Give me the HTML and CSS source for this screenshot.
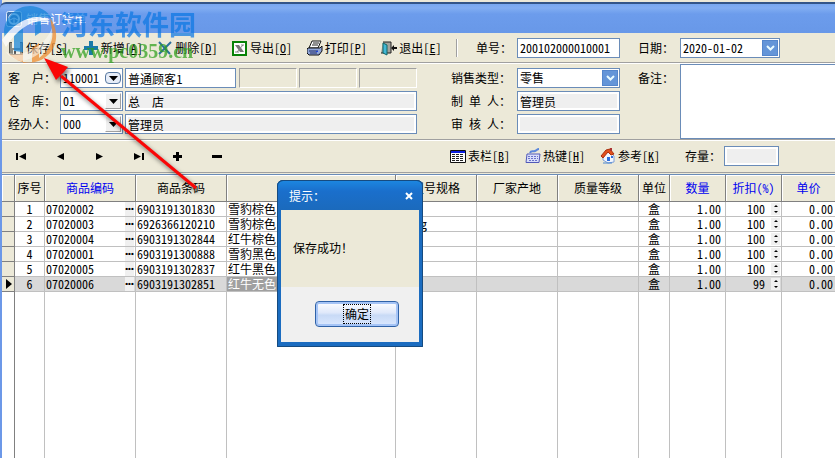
FILE: index.html
```html
<!DOCTYPE html>
<html lang="zh-CN">
<head>
<meta charset="utf-8">
<title>销售订货单</title>
<link rel="stylesheet" href="styles.css">
</head>
<body>
<div class="window">
  <header class="titlebar">
    <svg class="app-icon" width="16" height="16" viewBox="0 0 16 16"><rect x=".5" y=".5" width="15" height="15" rx="2" fill="#3c73b4" stroke="#dbe9fb"/><circle cx="8" cy="8" r="5" fill="none" stroke="#e8f2ff" stroke-width="2"/><path d="M4 9l4-2 4 2M8 8v4" stroke="#e8f2ff" fill="none"/></svg>
    <h1 class="title">销售订货单</h1>
  </header>

  <div class="toolbar">
    <div class="tools">
      <button class="tool"><svg width="16" height="16" viewBox="0 0 16 16"><path d="M1.500 2.500h13v12h-12l-1-1z" fill="#8b8b83" stroke="#55554f"/><path d="M4 2h8v6H4zM5 10h7v4H5z" fill="#f3f0e6"/><path d="M6 11h2v3H6z" fill="#555"/></svg>保存[<u>S</u>]</button>
      <button class="tool"><svg width="16" height="16" viewBox="0 0 16 16"><path d="M6 1h4v5h5v4h-5v5H6v-5H1V6h5z" fill="#1a7ba8"/></svg>新增[<u>A</u>]</button>
      <button class="tool"><svg width="16" height="16" viewBox="0 0 16 16"><path d="M2 2l11 12M14 2L2 14" stroke="#2b6f9e" stroke-width="2" fill="none"/></svg>删除[<u>D</u>]</button>
      <button class="tool"><svg width="16" height="16" viewBox="0 0 16 16"><rect x="1" y="2" width="13" height="13" fill="#fff" stroke="#078207" stroke-width="2"/><path d="M3 5h4l5 7H8z" fill="#777"/><path d="M11 5L5 12M3 12h4M9 5h3" stroke="#888" fill="none"/></svg>导出[<u>O</u>]</button>
      <button class="tool"><svg width="16" height="16" viewBox="0 0 16 16"><path d="M5 1h9l-3 7H2z" fill="#fff" stroke="#111"/><path d="M6 3h6M5 5h6" stroke="#222"/><path d="M1 8h12l2-2v5l-3 4H2l-2-2v-4z" fill="#8fa5d8" stroke="#111"/><path d="M2 11h9M3 13h7" stroke="#1e2b66"/><path d="M9 11h2v1H9z" fill="#1c40d8"/></svg>打印[<u>P</u>]</button>
      <button class="tool"><svg width="16" height="16" viewBox="0 0 16 16"><path d="M2 2h8v11H0" fill="#a3a39c" stroke="#222"/><path d="M2 3l4 2v10l-4-2z" fill="#41b7d6" stroke="#166"/><path d="M10 8l3-3v2h3v2h-3v2z" fill="#111"/></svg>退出[<u>E</u>]</button>
    </div>
    <span class="divider"></span>
    <label class="lab lab-no" for="no">单号：</label>
    <input class="field mid" id="no" value="200102000010001">
    <label class="lab lab-date" for="date">日期：</label>
    <span class="combo combo-date"><select id="date"><option>2020-01-02</option></select><span class="drop blue"><svg width="9" height="8" viewBox="0 0 9 8"><path d="M1 2l3.500 3.500L8 2" stroke="#e9fbff" stroke-width="2" fill="none"/></svg></span></span>
  </div>

  <div class="form">
    <div class="grid-left">
      <label class="lab" for="cust">客　户：</label>
      <div class="line">
        <span class="combo combo-s"><select id="cust"><option>110001</option></select><span class="drop hot"><svg width="9" height="5" viewBox="0 0 9 5"><path d="M0 0h9L4.500 5z"/></svg></span></span>
        <input class="field w-name" aria-label="客户名称" value="普通顾客1">
        <span class="well"></span><span class="well"></span><span class="well"></span>
      </div>
      <label class="lab" for="store">仓　库：</label>
      <div class="line">
        <span class="combo combo-s"><select id="store"><option>01</option></select><span class="drop"><svg width="9" height="5" viewBox="0 0 9 5"><path d="M0 0h9L4.500 5z"/></svg></span></span>
        <input class="field ro grow" aria-label="仓库名称" readonly value="总　店">
      </div>
      <label class="lab" for="oper">经办人：</label>
      <div class="line">
        <span class="combo combo-s"><select id="oper"><option>000</option></select><span class="drop"><svg width="9" height="5" viewBox="0 0 9 5"><path d="M0 0h9L4.500 5z"/></svg></span></span>
        <input class="field ro grow" aria-label="经办人姓名" readonly value="管理员">
      </div>
    </div>
    <div class="grid-mid">
      <label class="lab" for="type">销售类型：</label>
      <span class="combo"><select id="type"><option>零售</option></select><span class="drop blue"><svg width="9" height="8" viewBox="0 0 9 8"><path d="M1 2l3.500 3.500L8 2" stroke="#e9fbff" stroke-width="2" fill="none"/></svg></span></span>
      <label class="lab spread" for="maker"><span>制</span><span>单</span><span>人：</span></label>
      <input class="field ro" id="maker" readonly value="管理员">
      <label class="lab spread" for="check"><span>审</span><span>核</span><span>人：</span></label>
      <input class="field ro" id="check" readonly value="">
    </div>
    <label class="lab lab-note" for="note">备注：</label>
    <textarea class="note" id="note"></textarea>
  </div>

  <div class="nav">
    <div class="nav-left">
      <button class="step" aria-label="首条"><svg width="11" height="9" viewBox="0 0 11 9"><path d="M0 1h2v7H0zM10 1v7L3 4.500z"/></svg></button>
      <button class="step" aria-label="上一条"><svg width="11" height="9" viewBox="0 0 11 9"><path d="M9 1v7L2 4.500z"/></svg></button>
      <button class="step" aria-label="下一条"><svg width="11" height="9" viewBox="0 0 11 9"><path d="M2 1v7l7-3.500z"/></svg></button>
      <button class="step" aria-label="末条"><svg width="11" height="9" viewBox="0 0 11 9"><path d="M1 1v7l7-3.500zM9 1h2v7H9z"/></svg></button>
      <button class="step" aria-label="增行"><svg width="11" height="9" viewBox="0 0 11 9"><path d="M4 0h3v3h3v3H7v3H4V6H1V3h3z"/></svg></button>
      <button class="step" aria-label="删行"><svg width="11" height="9" viewBox="0 0 11 9"><path d="M1 3h10v3H1z"/></svg></button>
    </div>
    <button class="tool"><svg width="16" height="16" viewBox="0 0 16 16"><path d="M.5 2.500h15v12H.5z" fill="#fff" stroke="#111"/><path d="M1 3h14v2H1z" fill="#0a1ee0"/><path d="M2 6.500h12M2 8.500h12M2 10.500h12M2 12.500h12" stroke="#222" stroke-dasharray="3 1"/></svg>表栏[<u>B</u>]</button>
    <button class="tool"><svg width="16" height="16" viewBox="0 0 16 16"><path d="M2 6h13l-1 8.500H1z" fill="#d9defa" stroke="#5058b8"/><path d="M3 8.500h10M3 10.500h10M4 12.500h8" stroke="#6a73c8" stroke-dasharray="2 1"/><path d="M5 5c1-3 3-1 5-2s2-2 4-2" stroke="#5a86dc" stroke-width="2" fill="none"/></svg>热键[<u>H</u>]</button>
    <button class="tool"><svg width="16" height="16" viewBox="0 0 16 16"><path d="M3 7l6-4 5 5v6l-6 1-5-3z" fill="#f3f7ff" stroke="#7da0d8"/><path d="M1 8l5-6 4-1 4 5-3 1-3-3-5 6z" fill="#e2501c" stroke="#a93010"/><path d="M10 0h2v3h-2z" fill="#a33"/><path d="M7 9h3v4H7zM11 8h2v2h-2z" fill="#2f6fdc"/><path d="M3 15h9" stroke="#4a86d0"/></svg>参考[<u>K</u>]</button>
    <label class="lab lab-stock" for="stock">存量：</label>
    <input class="field ro stock" id="stock" readonly value="">
  </div>

  <main class="sheet">
    <table>
      <colgroup><col class="c-mark"><col class="c-no"><col class="c-code"><col class="c-code"><col class="c-name"><col class="c-mid"><col class="c-mid"><col class="c-mid"><col class="c-unit"><col class="c-num"><col class="c-num"><col></colgroup>
      <thead><tr><th></th><th>序号</th><th class="key">商品编码</th><th>商品条码</th><th></th><th>型号规格</th><th>厂家产地</th><th>质量等级</th><th>单位</th><th class="key">数量</th><th class="key">折扣(%)</th><th class="key">单价</th></tr></thead>
      <tbody>
        <tr><td></td><td class="c">1</td><td><div class="pick">07020002<button aria-label="选择">•••</button></div></td><td>6903191301830</td><td>雪豹棕色</td><td></td><td></td><td></td><td class="c">盒</td><td class="r">1.00</td><td class="r"><div class="spin">100<i></i></div></td><td class="r p">0.00</td></tr>
        <tr><td></td><td class="c">2</td><td><div class="pick">07020003<button aria-label="选择">•••</button></div></td><td>6926366120210</td><td>雪豹棕色</td><td>100kg</td><td></td><td></td><td class="c">盒</td><td class="r">1.00</td><td class="r"><div class="spin">100<i></i></div></td><td class="r p">0.00</td></tr>
        <tr><td></td><td class="c">3</td><td><div class="pick">07020004<button aria-label="选择">•••</button></div></td><td>6903191302844</td><td>红牛棕色</td><td></td><td></td><td></td><td class="c">盒</td><td class="r">1.00</td><td class="r"><div class="spin">100<i></i></div></td><td class="r p">0.00</td></tr>
        <tr><td></td><td class="c">4</td><td><div class="pick">07020001<button aria-label="选择">•••</button></div></td><td>6903191300888</td><td>雪豹黑色</td><td></td><td></td><td></td><td class="c">盒</td><td class="r">1.00</td><td class="r"><div class="spin">100<i></i></div></td><td class="r p">0.00</td></tr>
        <tr><td></td><td class="c">5</td><td><div class="pick">07020005<button aria-label="选择">•••</button></div></td><td>6903191302837</td><td>红牛黑色</td><td></td><td></td><td></td><td class="c">盒</td><td class="r">1.00</td><td class="r"><div class="spin">100<i></i></div></td><td class="r p">0.00</td></tr>
        <tr class="current"><td><svg class="marker" width="7" height="10" viewBox="0 0 7 10"><path d="M1 0v10l6-5z"/></svg></td><td class="c">6</td><td><div class="pick">07020006<button aria-label="选择">•••</button></div></td><td>6903191302851</td><td class="cell-sel">红牛无色</td><td></td><td></td><td></td><td class="c">盒</td><td class="r">1.00</td><td class="r"><div class="spin">99<i></i></div></td><td class="r p">0.00</td></tr>
        <tr class="rest"><td></td><td></td><td></td><td></td><td></td><td></td><td></td><td></td><td></td><td></td><td></td><td></td></tr>
      </tbody>
    </table>
  </main>
</div>

<div class="mark">
  <svg width="56" height="60" viewBox="0 0 56 60"><path d="M3 26C4 12 15 1 29 1c9 0 18 5 22 13-3-2-7-2-11-1v14l-6 4V15c-5 2-9 5-12 8v24l-9-1V30l-8 9c-1-4-2-9-2-13z" fill="#1484d8"/><path d="M49 13c9 11 8 28-2 37-11 11-30 10-40-2 4 2 9 2 15 0v10h9V43l7-5v15c10-7 15-18 13-29-1-4-1-7-2-11z" fill="#f08a2c"/><path d="M1 35C13 16 37 5 49 17 35 13 18 21 5 42z" fill="#fff"/><path d="M5 47c18 7 40-7 46-24 1 17-15 31-31 33C13 55 8 51 5 47z" fill="#fff" opacity=".6"/></svg>
  <div class="mark-text"><span class="mark-cn">河东软件园</span><span class="mark-url">www.pc0359.cn</span></div>
</div>

<svg class="arrow" width="170" height="144" viewBox="0 0 170 144"><g class="arrow-shape"><path d="M20 20l135 112" stroke="#fa0606" stroke-width="3"/><path d="M3 2l24 9-5 6-7 7z" fill="#fa0606"/></g></svg>

<section class="dialog" role="dialog" aria-label="提示">
  <div class="dialog-head"><span>提示：</span><button class="close" aria-label="关闭"><svg width="8" height="8" viewBox="0 0 8 8"><path d="M1 1l6 6M7 1L1 7" stroke="#fff" stroke-width="2"/></svg></button></div>
  <p class="dialog-body">保存成功！</p>
  <div class="dialog-foot"><button class="ok"><span>确定</span></button></div>
</section>
</body>
</html>
```
FILE: styles.css
```css
* { box-sizing: border-box; }
body {
  margin: 0;
  height: 100vh;
  overflow: hidden;
  position: relative;
  background: #ece9d8;
  color: #000;
  font: 12px/14px "Noto Sans CJK SC", sans-serif;
}
button, input, select, textarea {
  font: inherit;
  font-feature-settings: inherit;
  color: inherit;
  margin: 0;
  padding: 0;
  border: 0;
  border-radius: 0;
  background: none;
}
svg { display: block; flex: none; }

/* half-width Latin and digits, so codes line up on a 6px grid */
.tool, .combo, table, .mid { font-feature-settings: "hwid"; }

.window {
  height: 100%;
  display: flex;
  flex-direction: column;
  border-left: 2px solid #6c98e8;
  padding-top: 2px;
}
.titlebar {
  height: 31px;
  flex: none;
  margin-left: -2px;
  padding: 0 6px;
  display: flex;
  align-items: center;
  gap: 4px;
  border-top: 2px solid #345688;
  border-radius: 6px 0 0 0;
  background: linear-gradient(#78a8f0, #82aef2 4px, #6c9cec 10px, #6898e8);
}
.title { margin: 0; font-size: 12px; font-weight: 400; color: #fff; }

.toolbar {
  height: 30px;
  flex: none;
  display: flex;
  align-items: center;
  border-bottom: 1px solid #a0a0a0;
  box-shadow: 0 1px #fff;
}
.tools { display: flex; padding-left: 6px; width: 454px; }
.tool {
  width: 75px;
  display: flex;
  align-items: center;
  white-space: nowrap;
}
.tool svg { margin-right: 2px; }
.tool u { text-underline-offset: 1px; }
.divider { width: 2px; height: 18px; background: #a0a0a0; border-right: 1px solid #fff; }
.lab { white-space: nowrap; }
.lab-no { width: 59px; padding-left: 18px; }
.lab-date { width: 60px; padding-left: 18px; }

.field {
  height: 20px;
  min-width: 0;
  padding: 0 2px;
  border: 1px solid #6a8cb8;
  background: #fff;
}
.mid { width: 103px; }
.ro { background: #efefef; box-shadow: inset 0 0 0 2px #fff; }
.grow { flex: 1; }
.combo {
  height: 20px;
  display: flex;
  position: relative;
  border: 1px solid #6a8cb8;
  background: #fff;
}
.combo select { width: 100%; padding: 0 2px; appearance: none; }
.combo-date { width: 100px; }
.combo-s { width: 63px; }
.drop {
  position: absolute;
  top: 1px;
  right: 1px;
  bottom: 1px;
  width: 16px;
  display: grid;
  place-items: center;
  background: #f0f0f0;
  border: 1px solid #fff;
  border-right-color: #a0a0a0;
  border-bottom-color: #a0a0a0;
  pointer-events: none;
}
.hot { border: 1px solid #57779f; border-radius: 4px; background: #e6edf8; top: 3px; bottom: 3px; }
.blue { background: #6495d8; border-color: #5486cc; }

.form {
  height: 77px;
  flex: none;
  display: flex;
  padding-left: 6px;
  border-bottom: 1px solid #a0a0a0;
  box-shadow: 0 1px #fff;
}
.grid-left, .grid-mid {
  display: grid;
  grid-auto-rows: 20px;
  row-gap: 3px;
  align-items: center;
  align-content: start;
  padding-top: 5px;
}
.grid-left { grid-template-columns: 52px 357px; width: 443px; flex: none; }
.grid-mid { grid-template-columns: 66px 103px; width: 187px; flex: none; }
.line { display: flex; gap: 2px; }
.w-name { width: 111px; margin-right: 1px; }
.well { width: 58px; height: 20px; border: 1px solid; border-color: #a0a0a0 #fff #fff #a0a0a0; }
.spread { display: flex; gap: 6px; }
.lab-note { width: 42px; padding-top: 8px; flex: none; }
.note {
  flex: 1;
  margin-top: 1px;
  border: 1px solid #6a8cb8;
  border-right: 0;
  background: #fff;
  resize: none;
}

.nav {
  height: 33px;
  flex: none;
  display: flex;
  align-items: center;
  border-bottom: 1px solid #a0a0a0;
}
.nav-left { display: flex; width: 448px; flex: none; }
.step { width: 39px; display: grid; place-items: center; }
.lab-stock { width: 49px; padding-left: 10px; }
.stock { width: 55px; }

.sheet {
  flex: 1;
  min-height: 0;
  margin-top: 1px;
  border-top: 1px solid #6a8cb8;
  background: #fff;
}
table {
  width: 100%;
  height: 100%;
  table-layout: fixed;
  border-collapse: separate;
  border-spacing: 0;
}
.c-mark { width: 13px; }
.c-no { width: 30px; }
.c-code { width: 91px; }
.c-name { width: 169px; }
.c-mid { width: 81px; }
.c-unit { width: 31px; }
.c-num { width: 56px; }
th {
  height: 27px;
  padding: 0;
  font-weight: 400;
  white-space: nowrap;
  background: #ece9d8;
  border-right: 1px solid #808080;
  border-bottom: 1px solid #808080;
  box-shadow: inset 1px 1px #fff;
}
.key { color: #0000f0; }
td {
  height: 15px;
  padding: 0 1px;
  line-height: 14px;
  white-space: nowrap;
  border-right: 1px solid #c0c0c0;
  border-bottom: 1px solid #c0c0c0;
}
td:first-child { padding: 0; background: #ece9d8; border-color: #808080; }
td:nth-child(2) { padding: 0; }
th:last-child, td:last-child { border-right: 0; }
.c { text-align: center; }
.r { text-align: right; padding-right: 4px; }
td.p { padding-right: 2px; }
.pick { display: flex; justify-content: space-between; height: 14px; }
.pick button { width: 9px; font: 700 8px/14px "Liberation Sans", sans-serif; background: #f0f0f0; }
.spin { display: flex; justify-content: flex-end; align-items: center; gap: 6px; height: 14px; margin-right: -3px; }
.spin i { width: 9px; height: 12px; display: flex; flex-direction: column; justify-content: space-between; align-items: center; background: #f0f0f0; padding: 2px 0; }
.spin i::before, .spin i::after { content: ""; border: 2px solid transparent; }
.spin i::before { border-top: 0; border-bottom-color: #000; }
.spin i::after { border-bottom: 0; border-top-color: #000; }
.current td { background: #d9d9d9; }
.current td:first-child { background: #ece9d8; }
.current .cell-sel { background: #a0a0a0; color: #fff; }
.marker { margin: 2px 0 2px 3px; }
.rest td { height: auto; border-bottom: 0; }
.rest td:first-child { background: #fff; }

.mark {
  position: absolute;
  left: 1px;
  top: 5px;
  display: flex;
  gap: 4px;
  opacity: .72;
  pointer-events: none;
}
.mark-text { display: flex; flex-direction: column; padding-top: 3px; }
.mark-cn { font-size: 27px; line-height: 31px; font-weight: 700; color: #0c78e4; }
.mark-url { font: 700 20px/24px "Liberation Serif", serif; color: #2ea01c; }
.arrow { position: absolute; left: 41px; top: 56px; pointer-events: none; }
.arrow-shape { filter: drop-shadow(2px 3px 2px rgba(0, 0, 0, .5)); }

.dialog {
  position: absolute;
  left: 277px;
  top: 180px;
  width: 146px;
  border: solid #1b6cc0;
  border-width: 0 4px 5px;
  border-radius: 6px 6px 0 0;
  outline: 1px solid #164b80;
  outline-offset: -1px;
  background: #f0f0f0;
}
.dialog-head {
  height: 30px;
  margin: 0 -4px;
  padding: 0 10px 0 12px;
  display: flex;
  align-items: center;
  justify-content: space-between;
  color: #fff;
  border-top: 1px solid #164b80;
  border-radius: 6px 6px 0 0;
  background: linear-gradient(#1c86e0, #1a6fcc 10px, #1b6abc);
}
.dialog-body { margin: 0; height: 77px; padding: 31px 12px; background: #ece9d8; }
.dialog-foot { height: 55px; display: grid; justify-content: center; padding: 14px 0 0 14px; }
.ok {
  width: 84px;
  height: 26px;
  border: 1px solid #2f62a8;
  border-radius: 4px;
  background: linear-gradient(#fff, #dfe8fa 45%, #c8daf6 55%, #dbe8ff);
  box-shadow: inset 0 0 0 2px #a5c4f6;
}
.ok span { display: inline-block; padding: 2px 1px; border: 1px dotted #000; }
```
